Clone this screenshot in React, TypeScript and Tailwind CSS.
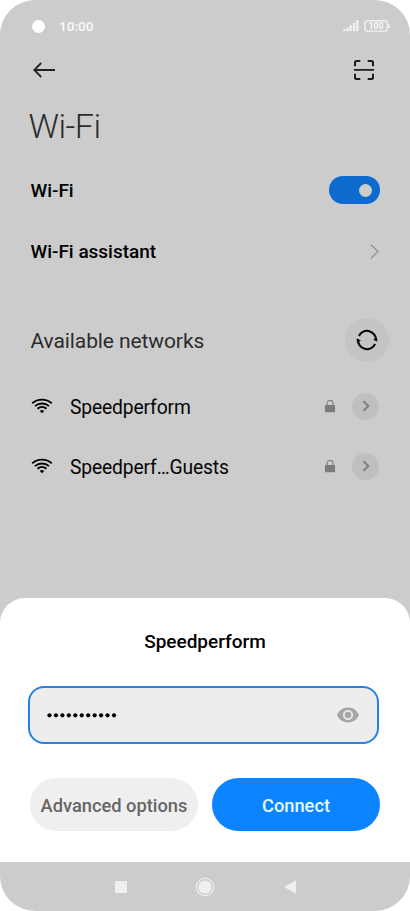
import { useState } from 'react'

interface Network {
  id: string
  name: string
}

const NETWORKS: Network[] = [
  { id: 'main', name: 'Speedperform' },
  { id: 'guests', name: 'Speedperf…Guests' },
]

const PASSWORD_LENGTH = 11

function StatusBar() {
  return (
    <div className="flex h-[52px] items-center pl-[31.5px] pr-5">
      <div className="h-[13px] w-[13px] rounded-full bg-white"></div>
      <span className="ml-[14.5px] text-[13.5px] leading-4 font-semibold text-[#f8f8f8]">10:00</span>
      <svg className="ml-auto" width="16" height="12" viewBox="0 0 16 12" fill="#f2f2f2">
        <rect x="0.3" y="9" width="2.3" height="2.2" />
        <rect x="3.4" y="7.5" width="2.3" height="3.7" />
        <rect x="6.5" y="5.3" width="2.3" height="5.9" />
        <rect x="9.8" y="2.9" width="2.3" height="8.3" />
        <rect x="13.1" y="0.3" width="2.3" height="10.9" />
      </svg>
      <svg className="ml-[5px]" width="26" height="12" viewBox="0 0 26 12">
        <rect x="0.8" y="0.7" width="22.4" height="10.4" rx="2.6" fill="none" stroke="#f2f2f2" strokeWidth="1.4" />
        <rect x="24.2" y="4" width="1.5" height="4" rx="0.6" fill="#f2f2f2" />
        <text x="12" y="9" textAnchor="middle" fontSize="8.5" fontWeight="500" fill="#ffffff">
          100
        </text>
      </svg>
    </div>
  )
}

function WifiIcon() {
  return (
    <svg width="22" height="16" viewBox="0 0 22 16" fill="none" stroke="#000" strokeWidth="1.9">
      <path d="M1.2 5.3C6.8 0.4 15.2 0.4 20.8 5.3" />
      <path d="M4 8.1C8.1 4.6 13.9 4.6 18 8.1" />
      <path d="M6.5 10.8C9.2 8.5 12.8 8.5 15.5 10.8" />
      <path d="M8.8 13Q11 11.2 13.2 13L11 15.3Z" fill="#000" stroke="none" />
    </svg>
  )
}

function LockIcon() {
  return (
    <svg width="12" height="13" viewBox="0 0 12 13">
      <path d="M3 5.5V3.5a3 3 0 0 1 6 0V5.5" fill="none" stroke="#7c7c7c" strokeWidth="1.1" />
      <rect x="0.9" y="4.9" width="10.2" height="7.4" rx="1" fill="#7c7c7c" />
    </svg>
  )
}

function NetworkRow({ network }: { network: Network }) {
  return (
    <div className="flex h-[60px] items-center pl-[31px] pr-[31px]">
      <WifiIcon />
      <span className="ml-[17px] pt-[3px] text-[19.3px] leading-6 tracking-[-0.15px] text-[#050505]">{network.name}</span>
      <div className="ml-auto flex items-center gap-4">
        <LockIcon />
        <button className="flex h-[27px] w-[27px] items-center justify-center rounded-full bg-[#bfbfbf]">
          <svg width="8" height="12" viewBox="0 0 8 12" fill="none" stroke="#828282" strokeWidth="2.2">
            <path d="M1.6 1.2L6.2 6L1.6 10.8" />
          </svg>
        </button>
      </div>
    </div>
  )
}

export default function App() {
  const [enabled, setEnabled] = useState(true)

  return (
    <div className="h-[911px] w-[410px] bg-white font-['Roboto',sans-serif]">
      <div className="flex h-full flex-col overflow-hidden rounded-[35px] bg-[#cccccc]">
        <StatusBar />

        <div className="flex h-9 items-center justify-between pl-[33px] pr-[35px]">
          <svg width="23" height="16" viewBox="0 0 23 16" fill="none" stroke="#222" strokeWidth="1.8">
            <path d="M22 8H1.5M8.2 1L1.3 8L8.2 15" />
          </svg>
          <svg width="22" height="22" viewBox="0 0 22 22" fill="none" stroke="#1c1c1c" strokeWidth="2">
            <path d="M2 7.3V3.5Q2 2 3.5 2H7.3M14.7 2H18.5Q20 2 20 3.5V7.3M20 14.7V18.5Q20 20 18.5 20H14.7M7.3 20H3.5Q2 20 2 18.5V14.7" />
            <path d="M1 10.8H21" strokeWidth="1.7" />
          </svg>
        </div>

        <h1 className="mt-[18px] pl-[28.5px] text-[34px] leading-10 font-light tracking-[-0.5px] text-[#2c2c2c]">Wi-Fi</h1>

        <div className="mt-[14px] flex h-[60px] items-center justify-between pl-[30.5px] pr-[30px]">
          <span className="pt-[3px] text-[19px] font-medium tracking-[-0.05px] text-black">Wi-Fi</span>
          <button
            onClick={() => setEnabled(!enabled)}
            className={`flex h-7 w-[51px] items-center rounded-full px-2 ${
              enabled ? 'justify-end bg-[#0d6bcf]' : 'justify-start bg-[#a0a0a0]'
            }`}
          >
            <span className="h-[13px] w-[13px] rounded-full bg-[#cccccc]"></span>
          </button>
        </div>

        <div className="flex h-[62px] items-center justify-between pl-[30.5px] pr-[31px]">
          <span className="pt-[2px] text-[19px] font-medium tracking-[-0.03px] text-black">Wi-Fi assistant</span>
          <svg width="9" height="15" viewBox="0 0 9 15" fill="none" stroke="#909090" strokeWidth="1.2">
            <path d="M1 0.8L8 7.5L1 14.2" />
          </svg>
        </div>

        <div className="mt-[35px] flex h-[45px] items-center justify-between pl-[30.5px] pr-[21px]">
          <h2 className="pt-[5px] text-[21px] tracking-[-0.1px] text-[#2c2c2c]">Available networks</h2>
          <button className="flex h-11 w-11 items-center justify-center rounded-full bg-[#c4c4c4]">
            <svg width="22" height="22" viewBox="0 0 22 22" fill="none" stroke="#000" strokeWidth="2">
              <path d="M2.9 7A9 9 0 0 1 20 11.5" />
              <path d="M19.1 15A9 9 0 0 1 2 10.5" />
              <path d="M17 10.2L21.2 8.9V12.8Z" fill="#000" stroke="none" />
              <path d="M5 11.8L0.8 13.1V9.2Z" fill="#000" stroke="none" />
            </svg>
          </button>
        </div>

        <div className="mt-[14px]">
          {NETWORKS.map((network) => (
            <NetworkRow key={network.id} network={network} />
          ))}
        </div>

        {/* Password sheet */}
        <div className="mt-auto h-[264px] shrink-0 rounded-t-[25px] bg-white px-[30px]">
          <h3 className="pt-8 text-center text-[19px] leading-6 font-medium text-black">Speedperform</h3>

          <div className="-ml-[2px] mt-8 flex h-[58px] w-[351px] items-center justify-between rounded-[16px] border-2 border-[#2482e5] bg-[#ededed] pl-[17px] pr-[17px]">
            <svg width="71" height="6" viewBox="0 0 71 6" fill="#000">
              {Array.from({ length: PASSWORD_LENGTH }).map((_, i) => (
                <circle key={i} cx={2.5 + i * 6.45} cy="3.3" r="2.1" />
              ))}
            </svg>
            <svg width="24" height="24" viewBox="0 0 24 24" fill="#a6a6a6">
              <path d="M12 4.5C7 4.5 2.73 7.61 1 12c1.73 4.39 6 7.5 11 7.5s9.27-3.11 11-7.5c-1.73-4.39-6-7.5-11-7.5zM12 17c-2.76 0-5-2.24-5-5s2.24-5 5-5 5 2.24 5 5-2.24 5-5 5zm0-8.3a3.3 3.3 0 1 0 0 6.6 3.3 3.3 0 0 0 0-6.6z" />
            </svg>
          </div>

          <div className="mt-[34px] flex gap-[14px]">
            <button className="h-[53px] flex-1 rounded-full bg-[#efefef] pt-[2px] text-[18.3px] font-medium whitespace-nowrap text-[#666]">
              Advanced options
            </button>
            <button className="h-[53px] flex-1 rounded-full bg-[#0d84ff] pt-[2px] text-[18.3px] font-medium text-[#e6f8ff]">
              Connect
            </button>
          </div>
        </div>

        {/* System navigation */}
        <div className="flex h-[49px] shrink-0 items-center pl-[115px]">
          <div className="h-3 w-3 bg-[#efefef]"></div>
          <svg className="ml-[68px]" width="20" height="20" viewBox="0 0 20 20">
            <circle cx="10" cy="10" r="8.6" fill="none" stroke="#efefef" strokeWidth="1.2" />
            <circle cx="10" cy="10" r="6.6" fill="#efefef" />
          </svg>
          <svg className="ml-[69px]" width="12" height="14" viewBox="0 0 12 14" fill="#efefef">
            <path d="M12 0.3V13.7L0 7Z" />
          </svg>
        </div>
      </div>
    </div>
  )
}
